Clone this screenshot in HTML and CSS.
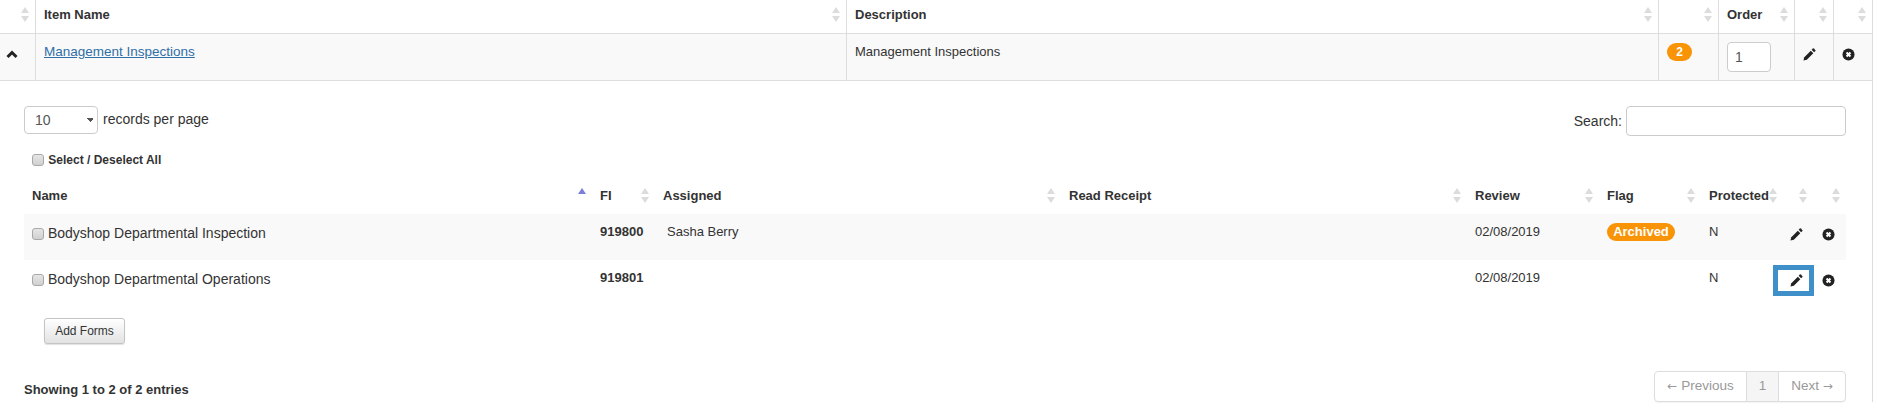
FILE: index.html
```html
<!DOCTYPE html>
<html>
<head>
    <link rel="stylesheet" href="styles.css">
</head>
<body>
    <svg class="icon-defs" width="0" height="0">
        <symbol id="pencil" viewBox="0 0 14 14">
            <path d="M0.5 13.5l0.9-3.6 7-7 2.7 2.7-7 7z"/>
            <path d="M9.3 2l1.4-1.4q0.5-0.4 1 0l1.7 1.7q0.4 0.5 0 1l-1.4 1.4z"/>
        </symbol>
        <symbol id="remove" viewBox="0 0 14 14">
            <circle cx="7" cy="7" r="6.5"/>
            <path d="M4.9 4.9l4.2 4.2M9.1 4.9l-4.2 4.2" stroke="#fff" stroke-width="2.2"/>
        </symbol>
    </svg>

    <table class="grid">
        <colgroup>
            <col class="c-toggle"><col class="c-item"><col class="c-desc"><col class="c-count"><col class="c-order"><col class="c-act"><col class="c-act">
        </colgroup>
        <thead>
            <tr>
                <th><div class="head"><span></span><span class="sort"></span></div></th>
                <th><div class="head"><span>Item Name</span><span class="sort"></span></div></th>
                <th><div class="head"><span>Description</span><span class="sort"></span></div></th>
                <th><div class="head"><span></span><span class="sort"></span></div></th>
                <th><div class="head"><span>Order</span><span class="sort"></span></div></th>
                <th><div class="head"><span></span><span class="sort"></span></div></th>
                <th><div class="head"><span></span><span class="sort"></span></div></th>
            </tr>
        </thead>
        <tbody>
            <tr class="parent-row">
                <td class="toggle-cell">
                    <svg class="chevron" width="12" height="12" viewBox="0 0 12 12"><path d="M1.5 9l4.5-4.5 4.5 4.5" fill="none" stroke="#222" stroke-width="3"/></svg>
                </td>
                <td><a class="item-link" href="#">Management Inspections</a></td>
                <td>Management Inspections</td>
                <td><span class="badge badge-count">2</span></td>
                <td><input class="order-input" type="text" value="1"></td>
                <td class="icon-cell"><svg class="icon"><use href="#pencil"/></svg></td>
                <td class="icon-cell"><svg class="icon"><use href="#remove"/></svg></td>
            </tr>
            <tr>
                <td class="detail" colspan="7">
                    <div class="toolbar">
                        <label class="length">
                            <select class="length-select"><option>10</option></select>
                            records per page
                        </label>
                        <label class="search">Search: <input class="search-input" type="text"></label>
                    </div>

                    <label class="select-all"><input class="check" type="checkbox"> Select / Deselect All</label>

                    <table class="forms">
                        <colgroup>
                            <col class="f-name"><col class="f-fi"><col class="f-assigned"><col class="f-receipt"><col class="f-review"><col class="f-flag"><col class="f-protected"><col class="f-edit"><col class="f-del">
                        </colgroup>
                        <thead>
                            <tr>
                                <th><div class="head"><span>Name</span><span class="sort sort-asc"></span></div></th>
                                <th><div class="head"><span>FI</span><span class="sort"></span></div></th>
                                <th><div class="head"><span>Assigned</span><span class="sort"></span></div></th>
                                <th><div class="head"><span>Read Receipt</span><span class="sort"></span></div></th>
                                <th><div class="head"><span>Review</span><span class="sort"></span></div></th>
                                <th><div class="head"><span>Flag</span><span class="sort"></span></div></th>
                                <th><div class="head"><span>Protected</span><span class="sort"></span></div></th>
                                <th><div class="head"><span></span><span class="sort"></span></div></th>
                                <th><div class="head"><span></span><span class="sort"></span></div></th>
                            </tr>
                        </thead>
                        <tbody>
                            <tr class="striped">
                                <td class="name-cell"><label><input class="check" type="checkbox"> Bodyshop Departmental Inspection</label></td>
                                <td class="fi">919800</td>
                                <td class="assigned">Sasha Berry</td>
                                <td></td>
                                <td>02/08/2019</td>
                                <td><span class="badge badge-flag">Archived</span></td>
                                <td>N</td>
                                <td class="action"><a class="edit-link" href="#"><svg class="icon"><use href="#pencil"/></svg></a></td>
                                <td class="action"><svg class="icon"><use href="#remove"/></svg></td>
                            </tr>
                            <tr>
                                <td class="name-cell"><label><input class="check" type="checkbox"> Bodyshop Departmental Operations</label></td>
                                <td class="fi">919801</td>
                                <td class="assigned"></td>
                                <td></td>
                                <td>02/08/2019</td>
                                <td></td>
                                <td>N</td>
                                <td class="action"><a class="edit-link focused" href="#"><svg class="icon"><use href="#pencil"/></svg></a></td>
                                <td class="action"><svg class="icon"><use href="#remove"/></svg></td>
                            </tr>
                        </tbody>
                    </table>

                    <button class="add-forms" type="button">Add Forms</button>

                    <div class="footer">
                        <div class="info">Showing 1 to 2 of 2 entries</div>
                        <div class="pager">
                            <span class="page page-prev"><span class="pager-arrow">&larr;</span> Previous</span>
                            <span class="page page-current">1</span>
                            <span class="page page-next">Next <span class="pager-arrow">&rarr;</span></span>
                        </div>
                    </div>
                </td>
            </tr>
        </tbody>
    </table>
</body>
</html>
```

FILE: styles.css
```css
body {
    margin: 0;
    overflow: hidden;
    height: 415px;
    background: #fff;
    color: #333;
    font-family: "Liberation Sans", Arial, sans-serif;
    font-size: 13px;
    line-height: 20px;
}

.icon-defs {
    display: block;
    height: 0;
}

table {
    border-collapse: separate;
    border-spacing: 0;
    table-layout: fixed;
}

.grid {
    width: 1873px;
}

.c-toggle { width: 36px; }
.c-item { width: 811px; }
.c-desc { width: 812px; }
.c-count { width: 60px; }
.c-order { width: 76px; }
.c-act { width: 39px; }

.grid > thead th {
    padding: 0 6px 0 8px;
    border-right: 1px solid #ddd;
    border-bottom: 1px solid #ddd;
    box-sizing: border-box;
    height: 34px;
    text-align: left;
}

.grid > thead .head {
    margin-top: -4px;
}

.head {
    display: flex;
    justify-content: space-between;
    align-items: center;
    font-weight: bold;
}

.sort {
    flex: none;
    width: 8px;
    height: 15px;
    display: flex;
    flex-direction: column;
    justify-content: space-between;
}

.sort::before,
.sort::after {
    content: "";
    border-left: 4px solid transparent;
    border-right: 4px solid transparent;
}

.sort::before {
    border-bottom: 6px solid #dcdcdc;
}

.sort::after {
    border-top: 6px solid #dcdcdc;
}

.sort-asc::before {
    border-bottom-color: #7b7fd8;
}

.sort-asc::after {
    border-top-color: transparent;
}

.parent-row td {
    height: 47px;
    box-sizing: border-box;
    padding: 8px 8px 0;
    vertical-align: top;
    background: #f9f9f9;
    border-right: 1px solid #ddd;
    border-bottom: 1px solid #ddd;
}

.parent-row .toggle-cell {
    padding: 14px 0 0 6px;
}

.chevron {
    display: block;
}

.item-link {
    color: #2f6fa7;
    font-size: 13.5px;
}

.badge {
    display: inline-block;
    background: #f89406;
    color: #fff;
    font-weight: bold;
    text-align: center;
    border-radius: 10px;
}

.badge-count {
    width: 25px;
    height: 18px;
    margin-top: 1px;
    font-size: 12px;
    line-height: 18px;
}

.badge-flag {
    width: 68px;
    height: 18px;
    font-size: 13px;
    line-height: 18px;
}

.order-input {
    display: block;
    box-sizing: border-box;
    width: 44px;
    height: 30px;
    padding: 0 7px;
    border: 1px solid #ccc;
    border-radius: 4px;
    background: #fff;
    color: #555;
    font: 14px "Liberation Sans", Arial, sans-serif;
}

.parent-row .icon-cell {
    padding: 14px 0 0 8px;
}

.icon {
    display: block;
    width: 13px;
    height: 13px;
    fill: #222;
}

.detail {
    padding: 25px 26px 0 24px;
    border-right: 1px solid #ddd;
}

.toolbar {
    display: flex;
    justify-content: space-between;
    height: 30px;
    font-size: 14px;
}

.length {
    display: flex;
    align-items: flex-start;
    gap: 5px;
    line-height: 27px;
}

/* caret is two gradient corners, the native one is too big */
.length-select {
    appearance: none;
    box-sizing: border-box;
    width: 74px;
    height: 28px;
    padding: 0 10px;
    border: 1px solid #ccc;
    border-radius: 4px;
    background-color: #fff;
    background-image: linear-gradient(45deg, transparent 50%, #555 50%), linear-gradient(-45deg, transparent 50%, #555 50%);
    background-size: 3px 5px, 3px 5px;
    background-position: 62px 11px, 65px 11px;
    background-repeat: no-repeat;
    color: #555;
    font: 14px "Liberation Sans", Arial, sans-serif;
}

.search {
    display: flex;
    align-items: center;
    gap: 4px;
}

.search-input {
    box-sizing: border-box;
    width: 220px;
    height: 30px;
    border: 1px solid #ccc;
    border-radius: 4px;
    background: #fff;
}

.check {
    appearance: none;
    box-sizing: border-box;
    width: 12px;
    height: 12px;
    margin: 0;
    border: 1px solid #a8a8a8;
    border-radius: 3px;
    background: linear-gradient(#e6e6e6, #d0d0d0);
    vertical-align: -2px;
}

.select-all {
    display: block;
    height: 41px;
    box-sizing: border-box;
    padding: 14px 0 0 8px;
    font-size: 12px;
    font-weight: bold;
}

.select-all .check {
    margin-right: 1px;
}

.forms {
    width: 1822px;
}

.f-name { width: 568px; }
.f-fi { width: 63px; }
.f-assigned { width: 406px; }
.f-receipt { width: 406px; }
.f-review { width: 132px; }
.f-flag { width: 102px; }
.f-protected { width: 80px; }
.f-edit { width: 32px; }
.f-del { width: 33px; }

.forms th {
    height: 37px;
    box-sizing: border-box;
    padding: 0 6px 0 8px;
    text-align: left;
}

.forms td {
    height: 46px;
    box-sizing: border-box;
    padding: 8px 8px 0;
    vertical-align: top;
}

.striped td {
    background: #f9f9f9;
}

.forms .name-cell {
    padding-top: 9px;
    font-size: 14px;
}

.fi {
    font-weight: bold;
}

.forms .assigned {
    padding-left: 12px;
}

.forms .action {
    padding: 0;
}

.edit-link {
    display: flex;
    align-items: center;
    justify-content: flex-end;
    width: 31px;
    height: 21px;
    margin: 10px 0 0 -3px;
    padding-right: 6px;
    box-sizing: border-box;
}

.focused {
    outline: 5px solid #3f90c8;
}

.forms .action > .icon {
    margin: 14px 0 0 9px;
}

.add-forms {
    display: block;
    box-sizing: border-box;
    width: 81px;
    height: 26px;
    margin: 12px 0 0 20px;
    padding: 0;
    border: 1px solid #c4c4c4;
    border-radius: 3px;
    background: linear-gradient(#fff, #e2e2e2);
    box-shadow: 0 1px 1px rgba(0, 0, 0, 0.12);
    color: #333;
    font: 12px "Liberation Sans", Arial, sans-serif;
}

.footer {
    display: flex;
    justify-content: space-between;
    align-items: center;
    margin-top: 27px;
}

.info {
    margin-top: 6px;
    font-weight: bold;
}

.pager {
    display: flex;
    box-sizing: border-box;
    height: 31px;
    border: 1px solid #ddd;
    border-radius: 4px;
    box-shadow: 0 1px 1px rgba(0, 0, 0, 0.05);
    color: #999;
    font-size: 13.5px;
    line-height: 28px;
}

.pager-arrow {
    font-family: "DejaVu Sans", sans-serif;
    font-size: 12px;
}

.page {
    box-sizing: border-box;
    text-align: center;
}

.page-prev { width: 91px; }

.page-current {
    width: 33px;
    background: #f5f5f5;
    border-left: 1px solid #ddd;
    border-right: 1px solid #ddd;
}

.page-next { width: 66px; }
```
